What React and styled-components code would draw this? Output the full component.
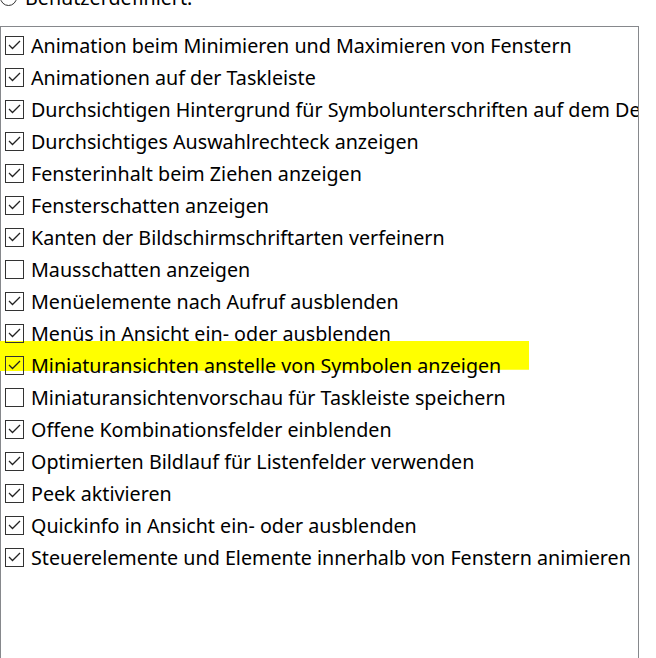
import styled, { createGlobalStyle } from "styled-components";

const GlobalStyle = createGlobalStyle`
  body {
    margin: 0;
    background: #ffffff;
    font-family: "Noto Sans", "Open Sans", sans-serif;
    color: #000000;
    overflow: hidden;
  }
`;

const options = [
  { label: "Animation beim Minimieren und Maximieren von Fenstern", checked: true },
  { label: "Animationen auf der Taskleiste", checked: true },
  { label: "Durchsichtigen Hintergrund für Symbolunterschriften auf dem Desktop verwenden", checked: true },
  { label: "Durchsichtiges Auswahlrechteck anzeigen", checked: true },
  { label: "Fensterinhalt beim Ziehen anzeigen", checked: true },
  { label: "Fensterschatten anzeigen", checked: true },
  { label: "Kanten der Bildschirmschriftarten verfeinern", checked: true },
  { label: "Mausschatten anzeigen", checked: false },
  { label: "Menüelemente nach Aufruf ausblenden", checked: true },
  { label: "Menüs in Ansicht ein- oder ausblenden", checked: true },
  { label: "Miniaturansichten anstelle von Symbolen anzeigen", checked: true },
  { label: "Miniaturansichtenvorschau für Taskleiste speichern", checked: false },
  { label: "Offene Kombinationsfelder einblenden", checked: true },
  { label: "Optimierten Bildlauf für Listenfelder verwenden", checked: true },
  { label: "Peek aktivieren", checked: true },
  { label: "Quickinfo in Ansicht ein- oder ausblenden", checked: true },
  { label: "Steuerelemente und Elemente innerhalb von Fenstern animieren", checked: true },
];

const Page = styled.div`
  position: relative;
  width: 656px;
  height: 658px;
  overflow: hidden;
`;

const RadioRow = styled.div`
  display: flex;
  align-items: center;
  gap: 8px;
  height: 26px;
  margin-top: -16px;
  font-size: 19.7px;
`;

const Radio = styled.span`
  width: 17px;
  height: 17px;
  border: 1px solid #333333;
  border-radius: 50%;
  box-sizing: border-box;
  flex-shrink: 0;
`;

const Panel = styled.div`
  width: 639px;
  height: 700px;
  box-sizing: border-box;
  border: 1px solid #86888c;
  padding-top: 2px;
  overflow: hidden;
  margin-top: 16px;
`;

const Row = styled.div`
  display: flex;
  align-items: center;
  height: 32px;
  padding-left: 4px;
  gap: 7px;
  white-space: nowrap;
  font-size: 19.7px;
  position: relative;
  z-index: 1;
`;

const Box = styled.span`
  width: 19px;
  height: 19px;
  border: 1px solid #333333;
  box-sizing: border-box;
  flex-shrink: 0;
  display: flex;
  align-items: center;
  justify-content: center;
`;

const Highlight = styled.div`
  position: absolute;
  left: 0;
  top: 341px;
  width: 529px;
  height: 30px;
  background: #ffff00;
  clip-path: polygon(0 0, 100% 0, 100% 96%, 0 100%);
  z-index: 0;
`;

const Check = () => (
  <svg width="13" height="10" viewBox="0 0 13 10">
    <path d="M1 5 L4.5 8.5 L12 1" fill="none" stroke="#222" strokeWidth="1.3" />
  </svg>
);

export default function App() {
  return (
    <>
      <GlobalStyle />
      <Page>
        <Highlight />
        <RadioRow>
          <Radio />
          Benutzerdefiniert:
        </RadioRow>
        <Panel>
          {options.map((o) => (
            <Row key={o.label}>
              <Box>{o.checked && <Check />}</Box>
              {o.label}
            </Row>
          ))}
        </Panel>
      </Page>
    </>
  );
}
